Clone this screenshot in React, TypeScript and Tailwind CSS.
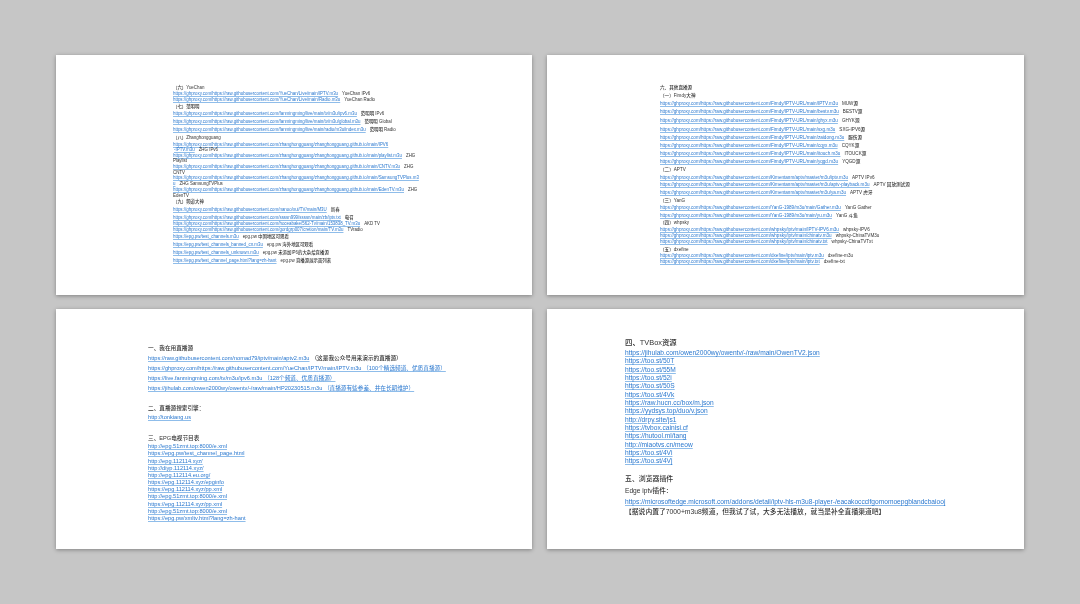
const FONT = "font-['Liberation_Sans','Noto_Sans_CJK_SC',sans-serif]";

type R = { t?: string; n?: string; h?: boolean; m: string; l?: string; nl?: string; s?: string };

const G = "https://ghproxy.com/https://raw.githubusercontent.com/";
const ZH = G + "zhanghongguang/zhanghongguang.github.io/main/";
const FM = G + "fanmingming/live/main/";
const FI = G + "Fimdy/IPTV-URL/main/";
const KI = G + "Kimentanm/aptv/master/m3u/";
const YA = G + "YanG-1989/m3u/main/";
const WH = G + "whpsky/iptv/main/";
const DX = G + "dxefine/iptv/main/";

const s1: R[] = [
  { h: true, t: "（六）YueChan", m: "mt-0" },
  { t: G + "YueChan/Live/main/IPTV.m3u", n: "YueChan IPv6", m: "mt-[1px]" },
  { t: G + "YueChan/Live/main/Radio.m3u", n: "YueChan Radio", m: "mt-[1px]" },
  { h: true, t: "（七）范明明", m: "mt-[2px]" },
  { t: FM + "tv/m3u/ipv6.m3u", n: "范明明 IPv6", m: "mt-[2.5px]" },
  { t: FM + "tv/m3u/global.m3u", n: "范明明 Global", m: "mt-[3px]" },
  { t: FM + "radio/m3u/index.m3u", n: "范明明 Radio", m: "mt-[3px]" },
  { h: true, t: "（八）Zhanghongguang", m: "mt-[3px]" },
  { t: ZH + "IPV6", m: "mt-[1.5px]" },
  { t: "-IPTV.m3u", n: "ZHG IPv6", m: "mt-[0.7px]", l: "pl-[1px]" },
  { t: ZH + "playlist.m3u", n: "ZHG", m: "mt-[0.6px]" },
  { n: "Playlist", m: "mt-[0.4px]", nl: "ml-0" },
  { t: ZH + "CNTV.m3u", n: "ZHG", m: "mt-[0.6px]" },
  { n: "CNTV", m: "mt-[1px]", nl: "ml-0" },
  { t: ZH + "SamsungTVPlus.m3", m: "mt-[0.2px]" },
  { t: "u", n: "ZHG SamsungTVPlus", m: "mt-[0.8px]" },
  { t: ZH + "EdenTV.m3u", n: "ZHG", m: "mt-[1px]" },
  { n: "EdenTV", m: "mt-[0.7px]", nl: "ml-0" },
  { h: true, t: "（九）频道大神", m: "mt-[1.3px]" },
  { t: G + "nanoo/xui/TV/main/M3U", n: "新春", m: "mt-[3px]" },
  { t: G + "ssssn999/ssssn/main/zb/iptv.txt", n: "电召", m: "mt-[3px]" },
  { t: G + "hoceabake/562-Tv/main/153838_TV.m3u", n: "AKD TV", m: "mt-[1px]" },
  { t: G + "gordgrp007/cretion/main/TV.m3u", n: "TVradio", m: "mt-[1px]" },
  { t: "https://epg.pw/test_channels.m3u", n: "epg.pw 中国地区可观看", m: "mt-[2.4px]" },
  { t: "https://epg.pw/test_channels_banned_cn.m3u", n: "epg.pw 海外地区可观看", m: "mt-[2.6px]" },
  { t: "https://epg.pw/test_channels_unknown.m3u", n: "epg.pw 未添加IP6的大杂烩直播源", m: "mt-[2.7px]" },
  { t: "https://epg.pw/test_channel_page.html?lang=zh-hant", n: "epg.pw 直播源展示面列表", m: "mt-[3px]" },
];

const s2: R[] = [
  { h: true, t: "六、其他直播源", m: "mt-0", l: "pl-0" },
  { h: true, t: "（一）Fimdy大神", m: "mt-[3px]" },
  { t: FI + "IPTV.m3u", n: "MUW源", m: "mt-[3.3px]" },
  { t: FI + "bestv.m3u", n: "BESTV源", m: "mt-[3.4px]" },
  { t: FI + "ghyx.m3u", n: "GHYK源", m: "mt-[4px]" },
  { t: FI + "sxg.m3u", n: "SXG-IPV6源", m: "mt-[3.3px]" },
  { t: FI + "zaidong.m3u", n: "服伤源", m: "mt-[3px]" },
  { t: FI + "cqyx.m3u", n: "CQYK源", m: "mt-[3px]" },
  { t: FI + "itouch.m3u", n: "ITOUCK源", m: "mt-[3.3px]" },
  { t: FI + "yqgd.m3u", n: "YQGD源", m: "mt-[3px]" },
  { h: true, t: "（二）APTV", m: "mt-[3.4px]" },
  { t: KI + "iptv.m3u", n: "APTV IPv6", m: "mt-[2.3px]" },
  { t: KI + "aptv-playback.m3u", n: "APTV 回放测试源", m: "mt-[2.7px]" },
  { t: KI + "ya.m3u", n: "APTV 虎牙", m: "mt-[2.6px]" },
  { h: true, t: "（三）YanG", m: "mt-[3px]" },
  { t: YA + "Gather.m3u", n: "YanG Gather", m: "mt-[2.4px]" },
  { t: YA + "yu.m3u", n: "YanG 斗鱼", m: "mt-[2.3px]" },
  { h: true, t: "（四）whpsky", m: "mt-[2.7px]" },
  { t: WH + "IPTV-IPV6.m3u", n: "whpsky-IPV6", m: "mt-[2.3px]" },
  { t: WH + "chinatv.m3u", n: "whpsky-ChinaTVM3u", m: "mt-[1px]" },
  { t: WH + "chinatv.txt", n: "whpsky-ChinaTVTxt", m: "mt-[1px]" },
  { h: true, t: "（五）dxefine", m: "mt-[2.3px]" },
  { t: DX + "iptv.m3u", n: "dxefine-m3u", m: "mt-[1.4px]" },
  { t: DX + "iptv.txt", n: "dxefine-txt", m: "mt-[1px]" },
];

const s3: R[] = [
  { h: true, t: "一、我在用直播源", m: "mt-0" },
  { t: "https://raw.githubusercontent.com/nomad79/iptv/main/aptv2.m3u", n: "（这是我公众号用来演示的直播源）", m: "mt-[3.7px]" },
  { t: G + "YueChan/IPTV/main/IPTV.m3u （100个精选频道、优质直播源）", m: "mt-[3px]" },
  { t: "https://live.fanmingming.com/tv/m3u/ipv6.m3u （128个频道、优质直播源）", m: "mt-[3px]" },
  { t: "https://jihulab.com/owen2000wy/owentv/-/raw/main/HP20230515.m3u （直播源有些参差、并在长期维护）", m: "mt-[3px]" },
  { h: true, t: "二、直播源搜索引擎：", m: "mt-[12.3px]" },
  { t: "http://tonkiang.us", m: "mt-[2px]" },
  { h: true, t: "三、EPG电视节目表", m: "mt-[14px]" },
  { t: "http://epg.51zmt.top:8000/e.xml", m: "mt-[1.7px]" },
  { t: "https://epg.pw/test_channel_page.html", m: "mt-0" },
  { t: "http://epg.112114.xyz/", m: "mt-[0.3px]" },
  { t: "http://diyp.112114.xyz/", m: "mt-[0.3px]" },
  { t: "http://epg.112114.eu.org/", m: "mt-0" },
  { t: "https://epg.112114.xyz/epginfo", m: "mt-[0.3px]" },
  { t: "https://epg.112114.xyz/pp.xml", m: "mt-0" },
  { t: "http://epg.51zmt.top:8000/e.xml", m: "mt-0" },
  { t: "https://epg.112114.xyz/pp.xml", m: "mt-[0.4px]" },
  { t: "http://epg.51zmt.top:8000/e.xml", m: "mt-[0.3px]" },
  { t: "https://epg.pw/xmltv.html?lang=zh-hant", m: "mt-0" },
];

const s4: R[] = [
  { h: true, t: "四、TVBox资源", m: "mt-0", s: "text-[7.4px]" },
  { t: "https://jihulab.com/owen2000wy/owentv/-/raw/main/OwenTV2.json", m: "mt-[2px]" },
  ...[
    "https://too.st/50T",
    "https://too.st/55M",
    "https://too.st/52i",
    "https://too.st/50S",
    "https://too.st/4Vk",
    "https://raw.hucn.cc/box/m.json",
    "https://yydsys.top/duo/v.json",
    "http://drpy.site/js1",
    "https://tvbox.cainisi.cf",
    "https://hutool.ml/tang",
    "http://miaotvs.cn/meow",
    "https://too.st/4Vi",
    "https://too.st/4Vj",
  ].map((t) => ({ t, m: "mt-[0.33px]" })),
  { h: true, t: "五、浏览器插件", m: "mt-[10.3px]", s: "text-[6.9px]" },
  { h: true, t: "Edge iptv插件：", m: "mt-[3.7px]" },
  { t: "https://microsoftedge.microsoft.com/addons/detail/iptv-hls-m3u8-player-/eacakoccclfgomomoepgblandcbaiooj", m: "mt-[3px]" },
  { h: true, t: "【据说内置了7000+m3u8频道，但我试了试，大多无法播放，就当是补全直播渠道吧】", m: "mt-[2px]", s: "text-[6.8px]" },
];

function Rows({ rows, size, box, nl }: { rows: R[]; size: string; box: string; nl: string }) {
  return (
    <>
      {rows.map((r, i) => (
        <div key={i} className={`flex items-center whitespace-nowrap ${box} ${r.s ?? size} ${r.m} ${r.l ?? ""}`}>
          {r.t &&
            (r.h ? (
              <span className="font-medium text-[#333333]">{r.t}</span>
            ) : (
              <span className="text-[#2a78cf] underline decoration-[#8fbdea]">{r.t}</span>
            ))}
          {r.n && <span className={`font-medium text-[#333333] ${r.nl ?? nl}`}>{r.n}</span>}
        </div>
      ))}
    </>
  );
}

function Slide({ className, children }: { className: string; children: React.ReactNode }) {
  return (
    <div className={`h-[240px] bg-white shadow-[0_1px_4px_rgba(0,0,0,0.35)] flex flex-col overflow-hidden ${className}`}>
      <div className="flex flex-col blur-[0.4px]">{children}</div>
    </div>
  );
}

export default function App() {
  return (
    <div className={`w-[1080px] h-[604px] overflow-hidden bg-[#c6c6c6] pl-[56px] pt-[55px] ${FONT}`}>
      <div className="grid grid-cols-[476px_477px] grid-rows-[240px_240px] gap-x-[15px] gap-y-[14px]">
        <Slide className="pl-[117px] pt-[30.5px]">
          <Rows rows={s1} size="text-[4.42px]" box="h-[5px]" nl="ml-[4px]" />
        </Slide>
        <Slide className="pl-[113px] pt-[30.5px]">
          <Rows rows={s2} size="text-[4.6px]" box="h-[5px]" nl="ml-[4px]" />
        </Slide>
        <Slide className="pl-[92px] pt-[35.5px]">
          <Rows rows={s3} size="text-[5.65px]" box="h-[7px]" nl="ml-[2px]" />
        </Slide>
        <Slide className="pl-[78px] pt-[30px]">
          <Rows rows={s4} size="text-[6.64px]" box="h-[8px]" nl="ml-[2px]" />
        </Slide>
      </div>
    </div>
  );
}
